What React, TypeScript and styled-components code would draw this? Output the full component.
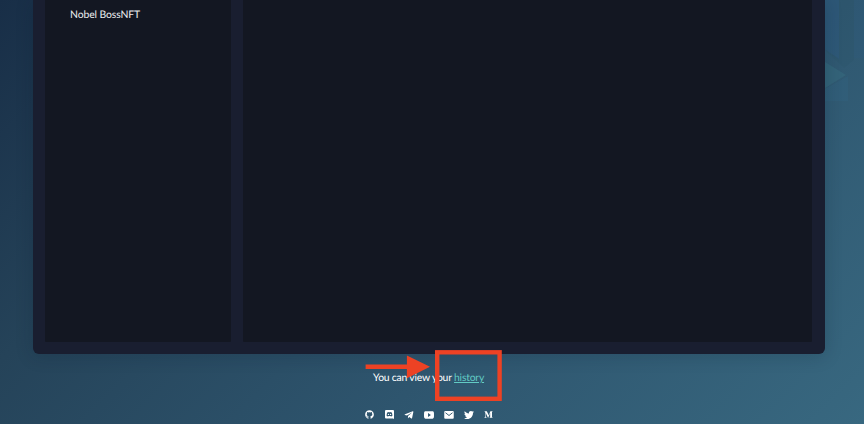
import React from 'react';
import styled, { createGlobalStyle } from 'styled-components';
import { FaGithub, FaTelegramPlane, FaTwitter, FaMediumM } from 'react-icons/fa';
import { IoLogoYoutube } from 'react-icons/io5';

const GlobalStyle = createGlobalStyle`
  * { box-sizing: border-box; }
  body { margin: 0; }
`;

const Page = styled.div`
  position: relative;
  width: 864px;
  height: 424px;
  overflow: hidden;
  display: flex;
  flex-direction: column;
  align-items: center;
  padding-right: 6px;
  background: linear-gradient(135deg, #182e47 0%, #254359 28%, #2e556e 62%, #386880 100%);
  font-family: Lato, 'Open Sans', sans-serif;
  text-rendering: geometricPrecision;
  color: #fff;
`;

const Backdrop = styled.svg`
  position: absolute;
  top: 0;
  right: 0;
`;

const Panel = styled.main`
  position: relative;
  display: grid;
  grid-template-columns: 186px 569px;
  gap: 12px;
  width: 792px;
  height: 353.6px;
  padding: 0 12px 12px;
  border-radius: 0 0 6px 6px;
  background: #191e30;
  box-shadow: 0 2px 18px rgba(10, 25, 42, 0.2);
`;

const Column = styled.section`
  background: #131722;
  border-radius: 0 0 1px 1px;
  padding: 8px 0 0 25px;
`;

const CollectionName = styled.div`
  font-size: 10.4px;
  line-height: 15px;
  letter-spacing: -0.1px;
  color: #eceef0;
  white-space: nowrap;
`;

const HistoryNote = styled.p`
  position: relative;
  width: 112px;
  margin: 17.4px 0 0;
  font-size: 10.4px;
  line-height: 15px;
  letter-spacing: -0.21px;
  white-space: nowrap;
`;

const HistoryLink = styled.a`
  color: #62cbc4;
  text-decoration: underline;
  text-decoration-thickness: 1px;
  text-underline-offset: 1px;
`;

const Footer = styled.footer`
  display: grid;
  grid-template-columns: repeat(7, 19.8px);
  justify-items: center;
  align-items: center;
  margin-top: 24px;
  height: 10px;
  svg { display: block; }
`;

const Annotation = styled.svg`
  position: absolute;
  left: 360px;
  top: 345px;
`;

const DiscordIcon = () => (
  <svg width="9" height="9" viewBox="0 0 18 18" fill="#fff">
    <path
      fillRule="evenodd"
      d="M2 0h14q2 0 2 2v16l-2-1H2q-2 0-2-2V2Q0 0 2 0Zm2.5 5Q3.2 8 3.2 11.5q1.3 1.3 3 1.3l.8-1q2 .5 4 0l.8 1q1.7 0 3-1.3 0-3.5-1.3-6.5Q12 4 11 4l-.4.6H7.4L7 4Q6 4 4.5 5Z"
    />
    <circle cx="6.9" cy="8.8" r="1.4" />
    <circle cx="11.1" cy="8.8" r="1.4" />
  </svg>
);

const MailIcon = () => (
  <svg width="10" height="8" viewBox="0 0 20 16">
    <rect width="19" height="15.5" x=".5" rx="2.2" fill="#fff" />
    <path d="m3 3.5 7 5.5 7-5.5" fill="none" stroke="#30586f" strokeWidth="1.9" />
  </svg>
);

export default function App() {
  return (
    <>
      <GlobalStyle />
      <Page>
        <Backdrop width="44" height="110" viewBox="0 0 44 110">
          <path d="M5 0h14v59L5 49Z" fill="#2c5884" opacity=".35" />
          <path d="M34 0h10v58H34Z" fill="#2c5884" opacity=".2" />
          <path d="M19 0h15v60L24 68 5 50 19 59Z" fill="#2a5265" opacity=".22" />
          <path d="M5 62 26 75 5 88Z" fill="#3b7485" opacity=".36" />
          <path d="M5 89 28 76v25H5Z" fill="#34698a" opacity=".24" />
        </Backdrop>
        <Panel>
          <Column>
            <CollectionName>Nobel BossNFT</CollectionName>
          </Column>
          <Column />
        </Panel>
        <HistoryNote>
          You can view your <HistoryLink>history</HistoryLink>
        </HistoryNote>
        <Footer>
          <FaGithub size={9} />
          <DiscordIcon />
          <FaTelegramPlane size={10} />
          <IoLogoYoutube size={10} />
          <MailIcon />
          <FaTwitter size={10} />
          <FaMediumM size={9} />
        </Footer>
        <Annotation width="146" height="60" viewBox="0 0 146 60" fill="#ed4224">
          <path d="M5.6 19.4h41.3V10.5L70 21.8 46.9 33.2V24H5.6Z" />
          <rect x="77.2" y="7.3" width="62.4" height="46.5" fill="none" stroke="#ed4224" strokeWidth="4.4" />
        </Annotation>
      </Page>
    </>
  );
}
